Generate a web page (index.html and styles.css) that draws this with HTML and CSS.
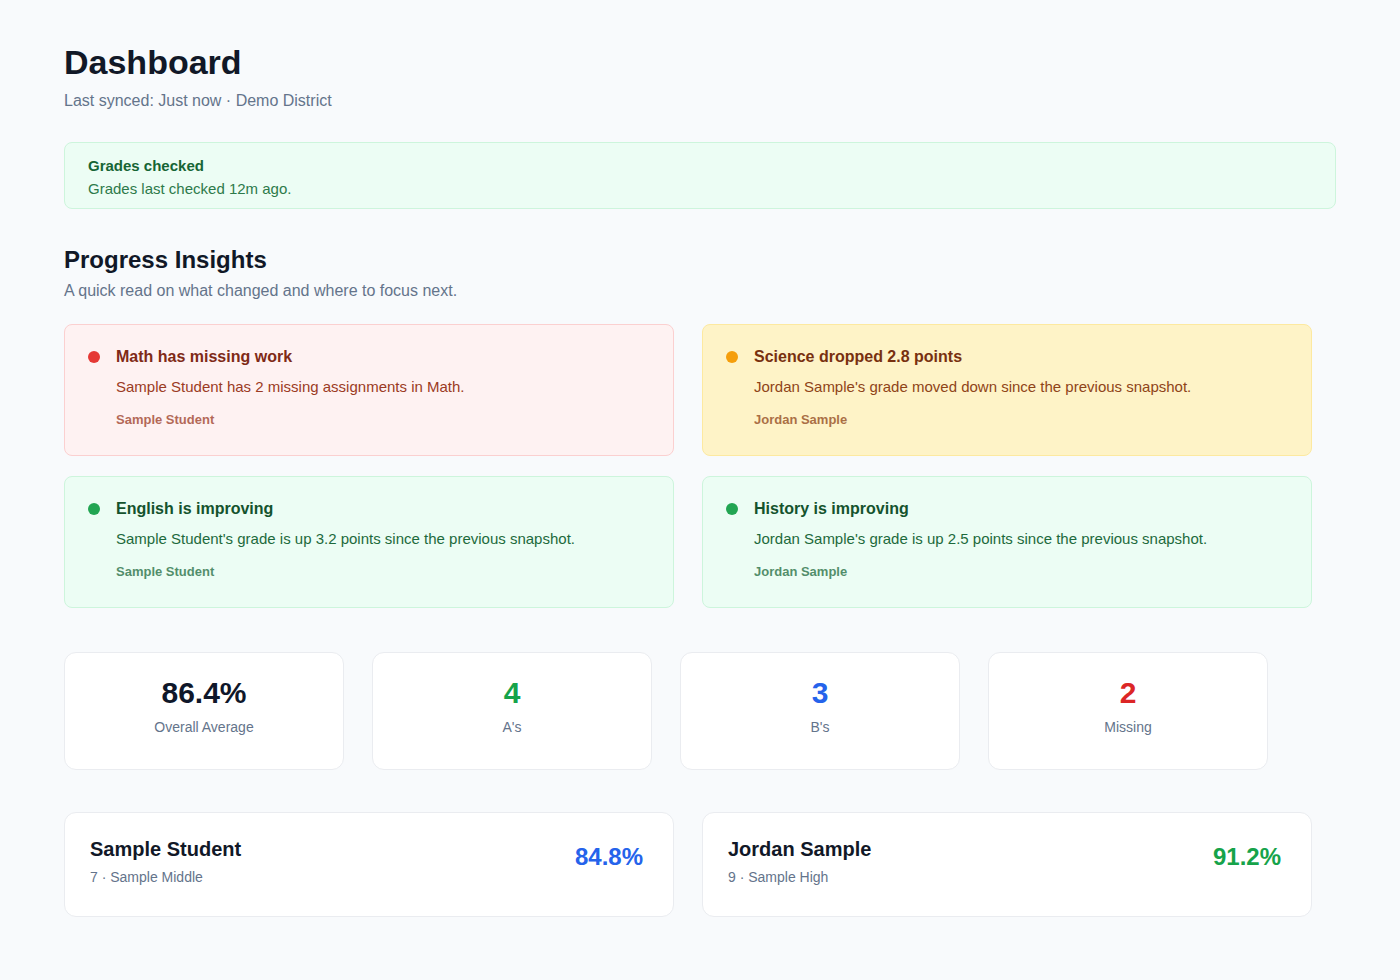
FILE: index.html
```html
<!DOCTYPE html>
<html lang="en">
<head>
    <meta charset="UTF-8">
    <meta name="viewport" content="width=device-width, initial-scale=1.0">
    <title>Dashboard</title>
    <link rel="stylesheet" href="styles.css">
</head>
<body>
    <main class="page">
        <header class="page-header">
            <h1>Dashboard</h1>
            <p class="muted">Last synced: Just now · Demo District</p>
        </header>

        <div class="banner">
            <div class="banner-title">Grades checked</div>
            <div class="banner-text">Grades last checked 12m ago.</div>
        </div>

        <section class="insights">
            <h2>Progress Insights</h2>
            <p class="muted">A quick read on what changed and where to focus next.</p>

            <div class="insight-grid">
                <div class="insight insight-red">
                    <span class="dot"></span>
                    <div class="insight-body">
                        <div class="insight-title">Math has missing work</div>
                        <div class="insight-text">Sample Student has 2 missing assignments in Math.</div>
                        <div class="insight-name">Sample Student</div>
                    </div>
                </div>
                <div class="insight insight-amber">
                    <span class="dot"></span>
                    <div class="insight-body">
                        <div class="insight-title">Science dropped 2.8 points</div>
                        <div class="insight-text">Jordan Sample's grade moved down since the previous snapshot.</div>
                        <div class="insight-name">Jordan Sample</div>
                    </div>
                </div>
                <div class="insight insight-green">
                    <span class="dot"></span>
                    <div class="insight-body">
                        <div class="insight-title">English is improving</div>
                        <div class="insight-text">Sample Student's grade is up 3.2 points since the previous snapshot.</div>
                        <div class="insight-name">Sample Student</div>
                    </div>
                </div>
                <div class="insight insight-green">
                    <span class="dot"></span>
                    <div class="insight-body">
                        <div class="insight-title">History is improving</div>
                        <div class="insight-text">Jordan Sample's grade is up 2.5 points since the previous snapshot.</div>
                        <div class="insight-name">Jordan Sample</div>
                    </div>
                </div>
            </div>
        </section>

        <section class="stats">
            <div class="stat">
                <div class="stat-value">86.4%</div>
                <div class="stat-label">Overall Average</div>
            </div>
            <div class="stat">
                <div class="stat-value green">4</div>
                <div class="stat-label">A's</div>
            </div>
            <div class="stat">
                <div class="stat-value blue">3</div>
                <div class="stat-label">B's</div>
            </div>
            <div class="stat">
                <div class="stat-value red">2</div>
                <div class="stat-label">Missing</div>
            </div>
        </section>

        <section class="students">
            <div class="student">
                <div>
                    <div class="student-name">Sample Student</div>
                    <div class="student-meta">7 · Sample Middle</div>
                </div>
                <div class="student-grade blue">84.8%</div>
            </div>
            <div class="student">
                <div>
                    <div class="student-name">Jordan Sample</div>
                    <div class="student-meta">9 · Sample High</div>
                </div>
                <div class="student-grade green">91.2%</div>
            </div>
        </section>
    </main>
</body>
</html>
```

FILE: styles.css
```css
/* Dashboard */
html, body {
    margin: 0;
    padding: 0;
    background-color: #f8fafc;
    font-family: 'Liberation Sans', Arial, sans-serif;
    color: #0f172a;
}

.page {
    padding: 42px 64px 40px;
}

h1 {
    margin: 0;
    font-size: 34px;
    line-height: 40px;
    font-weight: bold;
    color: #111827;
}

h2 {
    margin: 0;
    font-size: 24px;
    line-height: 30px;
    font-weight: bold;
    color: #111827;
}

.muted {
    margin: 0;
    font-size: 16px;
    line-height: 20px;
    color: #64748b;
}

.page-header .muted {
    margin-top: 9px;
}

/* sync banner */
.banner {
    margin-top: 31px;
    padding: 14px 24px 10px 23px;
    background-color: #ecfdf4;
    border: 1px solid #cdf5dc;
    border-radius: 8px;
    font-size: 15px;
    line-height: 18px;
}

.banner-title {
    font-weight: bold;
    color: #166534;
}

.banner-text {
    margin-top: 5px;
    color: #2d7a4a;
}

/* insights */
.insights {
    margin-top: 36px;
}

.insights .muted {
    margin-top: 6px;
}

.insight-grid {
    margin-top: 23px;
    display: grid;
    grid-template-columns: 610px 610px;
    column-gap: 28px;
    row-gap: 20px;
}

.insight {
    display: flex;
    gap: 16px;
    padding: 22px 24px 27px 23px;
    border: 1px solid;
    border-radius: 8px;
}

.dot {
    flex: none;
    width: 12px;
    height: 12px;
    margin-top: 4px;
    border-radius: 50%;
}

.insight-title {
    font-size: 16px;
    line-height: 20px;
    font-weight: bold;
}

.insight-text {
    margin-top: 10px;
    font-size: 15px;
    line-height: 20px;
}

.insight-name {
    margin-top: 15px;
    font-size: 13px;
    line-height: 16px;
    font-weight: bold;
    opacity: 0.75;
}

.insight-red {
    background-color: #fef2f2;
    border-color: #fbd0d0;
}
.insight-red .dot { background-color: #e53935; }
.insight-red .insight-title { color: #7f2a17; }
.insight-red .insight-text,
.insight-red .insight-name { color: #9b3b24; }

.insight-amber {
    background-color: #fef3c7;
    border-color: #fde9a0;
}
.insight-amber .dot { background-color: #f59e0b; }
.insight-amber .insight-title { color: #78300f; }
.insight-amber .insight-text,
.insight-amber .insight-name { color: #8f4418; }

.insight-green {
    background-color: #ecfdf4;
    border-color: #cdf5dc;
}
.insight-green .dot { background-color: #22a552; }
.insight-green .insight-title { color: #14532d; }
.insight-green .insight-text,
.insight-green .insight-name { color: #1d6a3c; }

/* stat tiles */
.stats {
    margin-top: 44px;
    display: grid;
    grid-template-columns: repeat(4, 280px);
    gap: 28px;
}

.stat {
    padding: 22px 16px 32px;
    background-color: #ffffff;
    border: 1px solid #eaecf0;
    border-radius: 12px;
    text-align: center;
}

.stat-value {
    font-size: 30px;
    line-height: 36px;
    font-weight: bold;
    color: #0f172a;
}

.stat-label {
    margin-top: 6px;
    font-size: 14px;
    line-height: 20px;
    color: #64748b;
}

.green { color: #16a34a; }
.blue { color: #2563eb; }
.red { color: #dc2626; }

/* students */
.students {
    margin-top: 42px;
    display: grid;
    grid-template-columns: 610px 610px;
    gap: 28px;
}

.student {
    display: flex;
    justify-content: space-between;
    align-items: flex-start;
    padding: 24px 30px 29px 25px;
    background-color: #ffffff;
    border: 1px solid #eaecf0;
    border-radius: 12px;
}

.student-name {
    font-size: 20px;
    line-height: 24px;
    font-weight: bold;
    color: #111827;
}

.student-meta {
    margin-top: 6px;
    font-size: 14px;
    line-height: 20px;
    color: #64748b;
}

.student-grade {
    margin-top: 5px;
    font-size: 24px;
    line-height: 30px;
    font-weight: bold;
}
```
